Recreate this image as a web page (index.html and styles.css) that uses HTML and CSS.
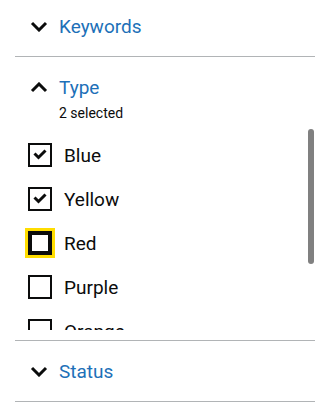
FILE: index.html
```html
<!DOCTYPE html>
<html lang="en">
<head>
<meta charset="utf-8">
<title>Filters</title>
<link rel="stylesheet" href="styles.css">
</head>
<body>
<div class="filters">
  <section class="acc first">
    <div class="acc-head">
      <svg class="chev" width="18" height="11" viewBox="0 0 18 11"><path d="M2 2 L9 9 L16 2" fill="none" stroke="#0b0c0c" stroke-width="3"/></svg>
      <span class="acc-title">Keywords</span>
    </div>
  </section>
  <section class="acc open">
    <div class="acc-head">
      <svg class="chev" width="18" height="11" viewBox="0 0 18 11"><path d="M2 9 L9 2 L16 9" fill="none" stroke="#0b0c0c" stroke-width="3"/></svg>
      <span class="acc-title">Type</span>
    </div>
    <div class="acc-summary">2 selected</div>
    <div class="list-wrap">
      <ul class="opts">
        <li class="opt"><span class="box"><svg class="tick" width="20" height="20" viewBox="0 0 20 20"><polyline points="4.5,8.5 8.5,12.5 15.5,5.5" fill="none" stroke="#0b0c0c" stroke-width="3"/></svg></span><span class="lbl">Blue</span></li>
        <li class="opt"><span class="box"><svg class="tick" width="20" height="20" viewBox="0 0 20 20"><polyline points="4.5,8.5 8.5,12.5 15.5,5.5" fill="none" stroke="#0b0c0c" stroke-width="3"/></svg></span><span class="lbl">Yellow</span></li>
        <li class="opt"><span class="box focus"></span><span class="lbl">Red</span></li>
        <li class="opt"><span class="box"></span><span class="lbl">Purple</span></li>
        <li class="opt"><span class="box"></span><span class="lbl">Orange</span></li>
      </ul>
      <div class="thumb"></div>
    </div>
  </section>
  <section class="acc">
    <div class="acc-head">
      <svg class="chev" width="18" height="11" viewBox="0 0 18 11"><path d="M2 2 L9 9 L16 2" fill="none" stroke="#0b0c0c" stroke-width="3"/></svg>
      <span class="acc-title">Status</span>
    </div>
  </section>
</div>
</body>
</html>
```
FILE: styles.css
```css
html, body {
  margin: 0;
  padding: 0;
  background: #ffffff;
}
body {
  font-family: Roboto, "Liberation Sans", sans-serif;
  color: #0b0c0c;
}
.filters {
  padding: 0 15px;
}
.acc {
  border-bottom: 1px solid #b1b4b6;
}
.acc-head {
  display: flex;
  align-items: center;
  gap: 11px;
  padding: 18px 0 17px 15px;
  font-size: 19px;
  line-height: 25px;
  color: #1d70b8;
}
.first .acc-head {
  padding-top: 14px;
}
.open .acc-head {
  padding-bottom: 0;
}
.chev {
  display: block;
  flex: none;
}
.acc-summary {
  padding-left: 44px;
  margin-top: 3px;
  font-size: 14px;
  line-height: 20px;
}
.list-wrap {
  position: relative;
  height: 202px;
  overflow: hidden;
  margin: 5px 0 10px;
}
.opts {
  list-style: none;
  margin: 0;
  padding: 5px 0 0 13px;
}
.opt {
  display: flex;
  align-items: center;
  gap: 12px;
  height: 44px;
  font-size: 19px;
  line-height: 25px;
}
.box {
  position: relative;
  flex: none;
  width: 24px;
  height: 24px;
  border: 2px solid #0b0c0c;
  box-sizing: border-box;
  background: #fff;
}
.box.focus {
  border-width: 4px;
  box-shadow: 0 0 0 3px #ffdd00;
}
.tick {
  display: block;
}
.thumb {
  position: absolute;
  top: 1px;
  right: 1px;
  width: 6px;
  height: 135px;
  border-radius: 3px;
  background: #808080;
}
```
